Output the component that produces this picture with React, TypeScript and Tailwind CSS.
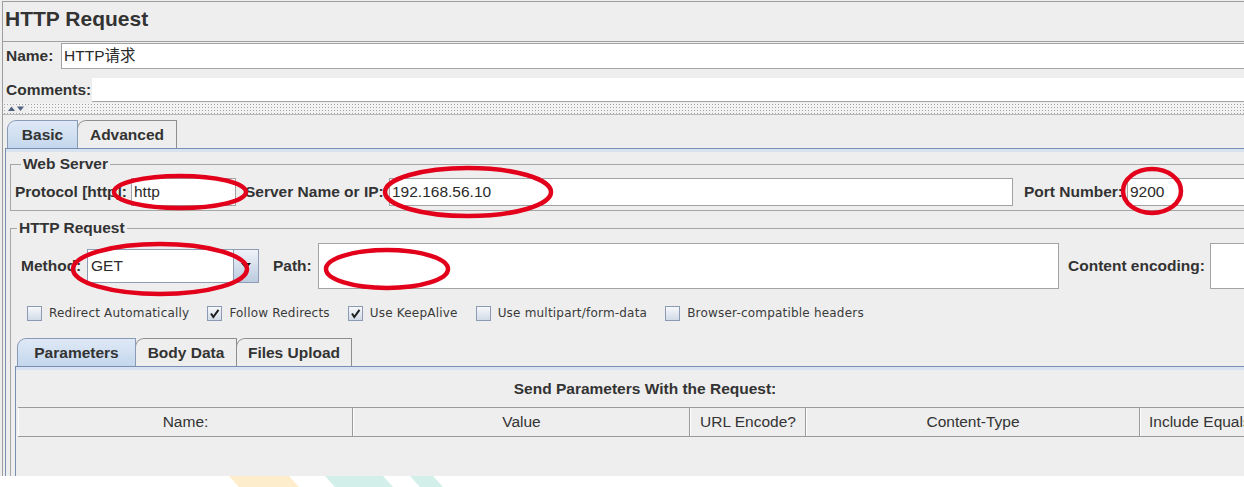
import React from 'react';

const FONT = "font-['Liberation_Sans','Noto_Sans_CJK_SC',sans-serif]";

function Tab({ label, selected, w }: { label: string; selected?: boolean; w: string }) {
  return (
    <div
      className={`${w} h-[28px] -mr-px flex items-center justify-center rounded-tl-[9px] border-t border-l border-r text-[15.5px] font-bold text-[#333] ${
        selected
          ? 'bg-linear-to-b from-[#dfe9f6] to-[#c4d7ed] border-[#8a9bb8] z-10'
          : 'bg-[#eeeeee] border-[#8e8e8e]'
      }`}
    >
      {label}
    </div>
  );
}

function TabStrip() {
  return (
    <>
      <div className="border-t border-[#7b8fb3]" />
      <div className="h-[3px] bg-[#d8e3f1]" />
    </>
  );
}

function Check({ label, checked, first }: { label: string; checked?: boolean; first?: boolean }) {
  return (
    <div className={`flex items-center ${first ? '' : 'ml-[18px]'}`}>
      <span className="w-[15px] h-[15px] border border-[#8c9bb3] bg-linear-to-b from-[#f6f8fb] to-[#d2dbe8] flex items-center justify-center">
        {checked && (
          <svg width="11" height="11" viewBox="0 0 11 11">
            <path d="M2 5.5 L4.3 9 L9.5 1.8" stroke="#1f1f1f" strokeWidth="2" fill="none" />
          </svg>
        )}
      </span>
      <span className="ml-[7px] text-[12px] tracking-[0.2px] font-['DejaVu_Sans',sans-serif] text-[#3a3a3a] whitespace-nowrap">
        {label}
      </span>
    </div>
  );
}

function Field({ value, className }: { value?: string; className: string }) {
  return (
    <div className={`h-[28px] bg-white border border-[#a3a3a3] flex items-center pl-[2px] text-[15.5px] text-[#2a2a2a] ${className}`}>
      {value}
    </div>
  );
}

const cols = [
  { label: 'Name:', w: 'w-[335px]' },
  { label: 'Value', w: 'w-[337px]' },
  { label: 'URL Encode?', w: 'w-[116px]' },
  { label: 'Content-Type', w: 'w-[334px]' },
];

export default function App() {
  return (
    <div className={`w-[1244px] h-[487px] bg-white ${FONT}`}>
      <div className="relative h-[476px] bg-[#eeeeee] overflow-hidden pt-[1px] pl-[2px]">
        <div className="h-full border-l border-t border-[#9d9d9d] flex flex-col">
          {/* title */}
          <div className="h-[39px] shrink-0 flex items-center pl-[2px] pb-[5px] text-[21px] font-bold text-[#333]">
            HTTP Request
          </div>

          {/* name */}
          <div className="h-[29px] shrink-0 border-t border-[#a0a0a0] flex items-center pl-[3px]">
            <span className="w-[55px] text-[15.5px] font-bold text-[#333]">Name:</span>
            <div className="flex-1 h-[26px] bg-white border border-r-0 border-[#a3a3a3] flex items-center pl-[2px] text-[15.5px] text-[#2a2a2a]">
              HTTP请求
            </div>
          </div>

          {/* comments */}
          <div className="h-[33px] shrink-0 flex pl-[3px]">
            <span className="w-[86px] self-center pt-[6px] text-[15.5px] font-bold text-[#333]">Comments:</span>
            <div className="flex-1 mt-[8px] h-[24px] bg-white border-b border-[#a3a3a3]" />
          </div>

          {/* split divider */}
          <div className="h-[12px] shrink-0 border-b border-[#b8b8b8] flex items-center bg-[radial-gradient(circle,#a3a3a3_0.7px,transparent_0.9px)] bg-[length:3px_3px] bg-[#f2f2f2]">
            <svg width="22" height="8" viewBox="0 0 22 8" className="ml-[4px] bg-[#eeeeee]">
              <path d="M1 6 L4.5 1.5 L8 6 Z" fill="#4f5f80" />
              <path d="M10 1.5 L17 1.5 L13.5 6 Z" fill="#4f5f80" />
            </svg>
          </div>

          {/* main tabs */}
          <div className="h-[33px] shrink-0 flex items-end pl-[4px]">
            <Tab label="Basic" selected w="w-[71px]" />
            <Tab label="Advanced" w="w-[100px]" />
          </div>

          <div className="flex-1 min-w-0 ml-[2px] border-l border-[#7b8fb3] flex flex-col">
            <TabStrip />

            {/* web server */}
            <fieldset className="min-w-0 ml-[4px] mt-[3px] border border-r-0 border-[#a6a6a6] pl-[4px] pt-[5px] pb-[4px]">
              <legend className="ml-[6px] px-[2px] text-[15.5px] leading-[18px] font-bold text-[#333]">Web Server</legend>
              <div className="h-[28px] flex items-center">
                <span className="w-[116px] text-[15.5px] font-bold text-[#333] whitespace-nowrap">Protocol [http]:</span>
                <Field value="http" className="w-[105px]" />
                <span className="ml-[9px] w-[144px] text-[15.5px] font-bold text-[#333] whitespace-nowrap">Server Name or IP:</span>
                <Field value="192.168.56.10" className="flex-1 min-w-0" />
                <span className="ml-[11px] w-[103px] text-[15.5px] font-bold text-[#333] whitespace-nowrap">Port Number:</span>
                <Field value="9200" className="w-[117px] border-r-0" />
              </div>
            </fieldset>

            {/* http request */}
            <fieldset className="min-w-0 flex-1 ml-[4px] mt-[8px] border border-r-0 border-b-0 border-[#a6a6a6] pt-[6px] flex flex-col">
              <legend className="ml-[6px] px-[2px] text-[15.5px] leading-[18px] font-bold text-[#333]">HTTP Request</legend>
              <div className="h-[46px] flex items-center pl-[10px]">
                <span className="w-[66px] text-[15.5px] font-bold text-[#333]">Method:</span>
                <div className="w-[172px] h-[34px] flex border border-[#8e9db5]">
                  <div className="flex-1 bg-white flex items-center pl-[3px] text-[15.5px] text-[#2a2a2a]">GET</div>
                  <div className="w-[25px] border-l border-[#8e9db5] bg-linear-to-b from-[#eef3f9] to-[#bccbdf] flex items-center justify-center">
                    <svg width="10" height="6" viewBox="0 0 10 6">
                      <path d="M0 0 L10 0 L5 6 Z" fill="#111" />
                    </svg>
                  </div>
                </div>
                <span className="ml-[14px] w-[45px] text-[15.5px] font-bold text-[#333]">Path:</span>
                <div className="flex-1 min-w-0 h-[46px] bg-white border border-[#a3a3a3]" />
                <span className="ml-[9px] w-[142px] text-[15.5px] font-bold text-[#333] whitespace-nowrap">Content encoding:</span>
                <div className="w-[34px] h-[46px] bg-white border border-r-0 border-[#a3a3a3]" />
              </div>

              <div className="h-[20px] mt-[14px] flex items-center pl-[16px]">
                <Check first label="Redirect Automatically" />
                <Check checked label="Follow Redirects" />
                <Check checked label="Use KeepAlive" />
                <Check label="Use multipart/form-data" />
                <Check label="Browser-compatible headers" />
              </div>

              {/* parameters tabs */}
              <div className="mt-[15px] ml-[4px] flex-1 min-w-0 flex flex-col">
                <div className="h-[28px] flex items-end pl-[2px]">
                  <Tab label="Parameters" selected w="w-[119px]" />
                  <Tab label="Body Data" w="w-[102px]" />
                  <Tab label="Files Upload" w="w-[116px]" />
                </div>
                <div className="flex-1 min-w-0 border-l border-[#7b8fb3] flex flex-col">
                  <TabStrip />
                  <div className="h-[37px] flex items-center justify-center pl-[30px] text-[15.5px] font-bold text-[#333]">
                    Send Parameters With the Request:
                  </div>
                  <div className="ml-[2px] h-[30px] flex border-t border-b border-[#9a9a9a]">
                    {cols.map((c) => (
                      <div
                        key={c.label}
                        className={`${c.w} shrink-0 border-r border-[#9a9a9a] border-l border-l-white bg-[#eeeeee] flex items-center justify-center text-[15.5px] text-[#333]`}
                      >
                        {c.label}
                      </div>
                    ))}
                    <div className="flex-1 min-w-0 border-l border-white bg-[#eeeeee] flex items-center pl-[8px] text-[15.5px] text-[#333] whitespace-nowrap overflow-hidden">
                      Include Equals?
                    </div>
                  </div>
                </div>
              </div>
            </fieldset>
          </div>
        </div>

        {/* red annotations */}
        <svg className="absolute inset-0 pointer-events-none" width="1244" height="476">
          <g fill="none" stroke="#e3001b" strokeWidth="4.5">
            <ellipse cx="180" cy="192" rx="66" ry="16" />
            <ellipse cx="468" cy="192" rx="83" ry="24" />
            <ellipse cx="1152" cy="191" rx="29" ry="22" />
            <ellipse cx="160" cy="269" rx="87" ry="25" />
            <ellipse cx="387" cy="269" rx="61" ry="19" />
          </g>
        </svg>
      </div>

      {/* watermark */}
      <div className="h-[11px] flex overflow-hidden">
        <div className="ml-[234px] w-[60px] h-full bg-[#fdedcc] skew-x-[42deg]" />
        <div className="ml-[36px] w-[58px] h-full bg-[#d3efe9] skew-x-[42deg]" />
        <div className="ml-[27px] w-[23px] h-full bg-[#d3efe9] skew-x-[42deg]" />
      </div>
    </div>
  );
}
